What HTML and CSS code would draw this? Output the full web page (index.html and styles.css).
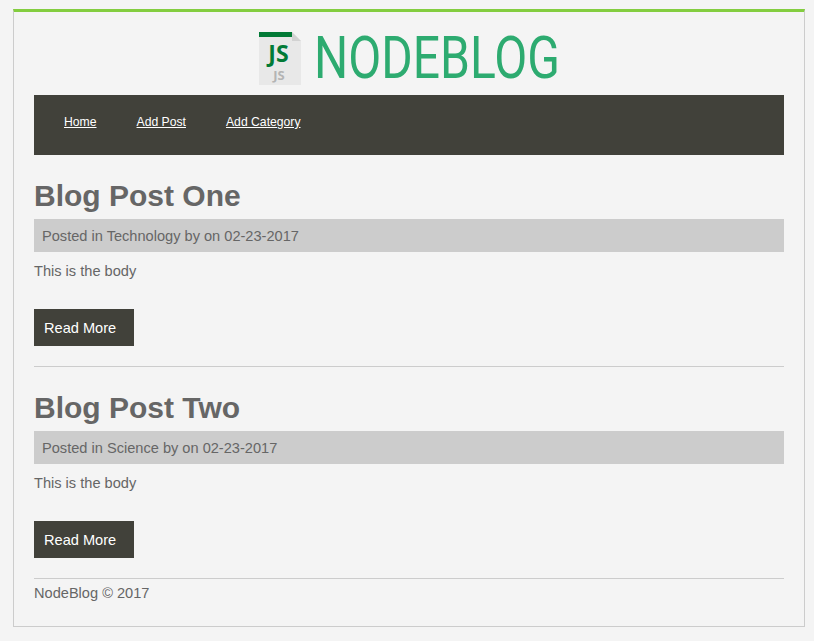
FILE: index.html
```html
<!DOCTYPE html>
<html lang="en">
<head>
<meta charset="utf-8">
<title>NodeBlog</title>
<link rel="stylesheet" href="styles.css">
</head>
<body>
<div class="container">
  <header class="logo">
    <svg class="logo-icon" width="42" height="53" viewBox="0 0 42 53" aria-hidden="true">
      <path d="M0 0H33L42 9V53H0Z" fill="#e8e8e8"/>
      <path d="M33 0L42 9H33Z" fill="#d2d2d2"/>
      <rect width="33" height="5" fill="#027a36"/>
      <text x="19.5" y="30" class="js-big">JS</text>
      <text x="20" y="48" class="js-small">JS</text>
    </svg>
    <span class="logo-text">NODEBLOG</span>
  </header>
  <nav class="nav">
    <a href="#">Home</a>
    <a href="#">Add Post</a>
    <a href="#">Add Category</a>
  </nav>
  <article class="post">
    <h1>Blog Post One</h1>
    <p class="meta">Posted in Technology by on 02-23-2017</p>
    <p class="body-text">This is the body</p>
    <a class="more" href="#">Read More</a>
  </article>
  <hr class="rule">
  <article class="post">
    <h1>Blog Post Two</h1>
    <p class="meta">Posted in Science by on 02-23-2017</p>
    <p class="body-text">This is the body</p>
    <a class="more" href="#">Read More</a>
  </article>
  <footer class="footer">NodeBlog © 2017</footer>
</div>
</body>
</html>
```
FILE: styles.css
```css
* { box-sizing: border-box; }
html, body { margin: 0; height: 100%; }
body {
  background: #f4f4f4;
  color: #666;
  font-family: "Liberation Sans", Arial, sans-serif;
  font-size: 14.6px;
  padding: 9px 9px 14px 13px;
}
.container {
  width: 792px;
  height: 618px;
  background: #f4f4f4;
  border: 1px solid #ccc;
  border-top: 3px solid #83cd3f;
  padding: 20px 20px 0;
}
.logo {
  height: 63px;
  display: flex;
  justify-content: flex-start;
  padding-left: 225px;
  gap: 13px;
}
.logo-icon { flex: none; }
.js-big {
  font-family: "Open Sans", sans-serif;
  font-weight: 700;
  font-size: 23px;
  fill: #027a36;
  text-anchor: middle;
}
.js-small {
  font-family: "Open Sans", sans-serif;
  font-weight: 700;
  font-size: 13px;
  fill: #b4b4b4;
  text-anchor: middle;
}
.logo-text {
  font-family: "Roboto", sans-serif;
  font-weight: 400;
  font-size: 60px;
  line-height: 52px;
  color: #2dab70;
  display: inline-block;
  white-space: nowrap;
  transform: scaleX(0.8);
  transform-origin: left center;
}
.nav {
  height: 60px;
  background: #41413a;
  padding: 19px 30px 0;
  display: flex;
  gap: 40px;
  font-size: 12.2px;
  line-height: 16px;
  align-items: flex-start;
}
.nav a { color: #fff; }
.post { padding-top: 20px; }
h1 {
  margin: 0 0 2px;
  font-size: 30px;
  line-height: 42px;
  font-weight: 700;
  color: #666;
}
.meta {
  margin: 0;
  background: #ccc;
  height: 33px;
  line-height: 34px;
  padding-left: 8px;
}
.body-text {
  margin: 0;
  padding-top: 10px;
  line-height: 18px;
  height: 57px;
}
.more {
  display: block;
  width: 100px;
  height: 37px;
  background: #41413a;
  color: #fff;
  line-height: 38px;
  padding-left: 10px;
  text-decoration: none;
}
.rule {
  margin: 20px 0 0;
  border: 0;
  border-top: 1px solid #ccc;
}
.footer {
  margin-top: 20px;
  border-top: 1px solid #ccc;
  padding-top: 6px;
  line-height: 16px;
}
```
